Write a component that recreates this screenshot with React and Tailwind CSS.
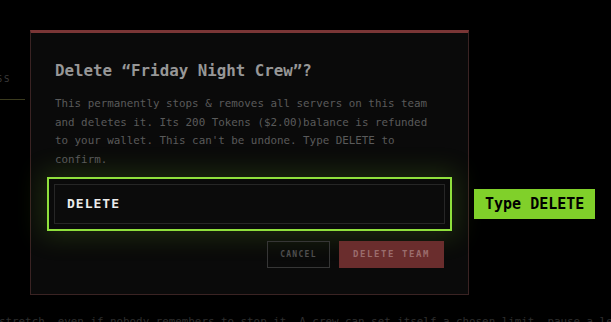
import React from "react";

const mono = { fontFamily: '"DejaVu Sans Mono", "Liberation Mono", monospace' };

const DeleteTeamModal = ({ teamName, tokens, dollars }) => {
  return (
    <div className="w-[439px] bg-[#0a0a0a] border border-[#3a2323] border-t-[3px] border-t-[#7a3636] px-6 pt-[26px] pb-[26px]">
      <h2 className="text-[15.8px] leading-6 font-bold text-[#979797]">
        Delete “{teamName}”?
      </h2>
      <p className="mt-[12px] text-[10.85px] leading-[18.5px] text-[#5a5a5a]">
        This permanently stops &amp; removes all servers on this team and deletes it. Its {tokens} Tokens ({dollars})balance is refunded to your wallet. This can't be undone. Type DELETE to confirm.
      </p>

      <div className="-mx-2 mt-[8px] border-2 border-[#8fe03c] p-[5px] shadow-[0_0_26px_6px_rgba(128,210,40,0.16)]">
        <div className="h-10 flex items-center border border-[#262626] bg-[#0b0b0b] px-3">
          <span className="text-[13px] font-bold tracking-[1px] text-[#ececec]">DELETE</span>
        </div>
      </div>

      <div className="mt-[10px] flex justify-end gap-[9px]">
        <button className="h-[27px] w-[63px] border border-[#363636] text-[8px] tracking-[1.3px] text-[#4e4e4e] font-bold">
          CANCEL
        </button>
        <button className="h-[27px] w-[105px] bg-[#6a2d2d] text-[9px] tracking-[1.6px] text-[#9a6c6c] font-bold">
          DELETE TEAM
        </button>
      </div>
    </div>
  );
};

export default function App() {
  return (
    <div className="relative h-[322px] w-full overflow-hidden bg-black" style={mono}>
      {/* page behind the dialog */}
      <div className="pt-[73px]">
        <div className="w-[25px] border-b border-[#3b3b1e] pb-[12px] overflow-hidden">
          <span className="block -ml-[33px] text-[9px] tracking-[2px] text-[#3c3c3c] whitespace-nowrap">ACCESS</span>
        </div>
        <p className="mt-[214px] -ml-[1px] whitespace-nowrap text-[10.85px] text-[#2e2e2e]">
          stretch, even if nobody remembers to stop it. A crew can set itself a chosen limit, pause a league over the break
        </p>
      </div>

      {/* dialog layer */}
      <div className="absolute inset-0 flex items-start pl-[30px] pt-[30px]">
        <DeleteTeamModal teamName="Friday Night Crew" tokens={200} dollars="$2.00" />
        <div className="ml-[5px] mt-[159px] h-[30px] px-[11px] flex items-center bg-[#80d02a] text-[15px] font-bold text-black whitespace-nowrap">
          Type DELETE
        </div>
      </div>
    </div>
  );
}
